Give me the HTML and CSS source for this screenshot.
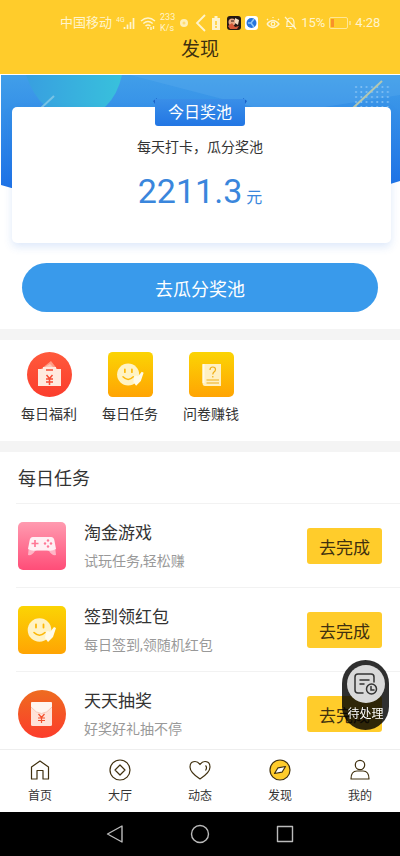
FILE: index.html
```html
<!DOCTYPE html>
<html lang="zh-CN">
<head>
<meta charset="utf-8">
<meta name="viewport" content="width=device-width, initial-scale=1">
<title>发现</title>
<link rel="stylesheet" href="styles.css">
</head>
<body>
<svg class="defs" width="0" height="0" aria-hidden="true">
  <defs>
    <linearGradient id="gold" x1="0" y1="0" x2="0" y2="1"><stop offset="0" stop-color="#fbd404"/><stop offset="1" stop-color="#ffa403"/></linearGradient>
    <linearGradient id="red" x1="0" y1="0" x2="0" y2="1"><stop offset="0" stop-color="#ff5a3c"/><stop offset="1" stop-color="#fb3d2c"/></linearGradient>
    <linearGradient id="orange" x1="0" y1="0" x2="0" y2="1"><stop offset="0" stop-color="#ee6c20"/><stop offset="1" stop-color="#fc3c2b"/></linearGradient>
    <linearGradient id="pink" x1="0" y1="0" x2="0" y2="1"><stop offset="0" stop-color="#ff9bb0"/><stop offset="1" stop-color="#ff4d78"/></linearGradient>
    <linearGradient id="sky" x1="0" y1="0" x2="0" y2="114" gradientUnits="userSpaceOnUse"><stop offset="0" stop-color="#419fe9"/><stop offset="1" stop-color="#1e72e6"/></linearGradient>
    <linearGradient id="teal" x1="0" y1="0" x2="1" y2="0"><stop offset="0" stop-color="#389fe0"/><stop offset="1" stop-color="#38c1dc"/></linearGradient>
    <pattern id="dots" width="5.3" height="5" patternUnits="userSpaceOnUse" x="354" y="11"><circle cx="2" cy="2" r="1" fill="#84c1f3"/></pattern>
    <symbol id="smile" viewBox="0 0 48 48">
      <rect width="48" height="48" rx="5" fill="url(#gold)"/>
      <circle cx="21.500" cy="24" r="11.800" fill="#fff3c4"/>
      <path d="M27 32l1-6 2-1 2 1 4-5 2 1-3 9-5 5z" fill="#fffbea"/>
      <path d="M18 18.500v3M25.500 18.500v3" stroke="#fcb80a" stroke-width="1.800" stroke-linecap="round"/>
      <path d="M16 26.500q5.500 5.500 11 0" fill="none" stroke="#fcb80a" stroke-width="1.600" stroke-linecap="round"/>
    </symbol>
  </defs>
</svg>

<header class="top">
  <div class="status">
    <span class="carrier">中国移动</span>
    <svg width="20" height="16" viewBox="0 0 20 16"><text x="0" y="7" class="tiny">4G</text><path d="M8.500 14v-2M11.500 14V9.500M14.500 14V7M17.500 14V3" stroke="currentColor" stroke-width="1.700"/></svg>
    <svg width="16" height="16" viewBox="0 0 16 16" fill="none" stroke="currentColor" stroke-width="1.400"><path d="M1 6q7-6 14 0M3.300 8.500q4.700-4 9.400 0M5.500 11q2.500-2 5 0"/><path d="M7 13h2M11 12v3M13.500 11v3"/></svg>
    <span class="speed">233<br>K/s</span>
    <svg class="dot" width="10" height="16" viewBox="0 0 10 16"><circle cx="5" cy="8" r="4" fill="#fff0b8"/><circle cx="5" cy="8" r="1.500" fill="#ffdc70"/></svg>
    <svg width="11" height="18" viewBox="0 0 11 18" fill="none" stroke="currentColor" stroke-width="1.800"><path d="M10 1L2 9l8 8"/></svg>
    <svg class="cell" width="8" height="16" viewBox="0 0 8 16"><path d="M2.500 1h3v2H8v12H0V3h2.500z" fill="currentColor"/><path d="M4 6v4M4 11v2" stroke="#ffcc2b" stroke-width="1.500"/></svg>
    <svg width="14" height="14" viewBox="0 0 14 14"><rect width="14" height="14" rx="3" fill="#251812"/><circle cx="5" cy="6" r="3.500" fill="#e8a783"/><path d="M1 10l4-3 3 4 4-1-2 3H3z" fill="#d55939"/><path d="M8 2l4 2-1 5-3-2z" fill="#f4dcc0"/><path d="M4 5h3" stroke="#251812"/></svg>
    <svg width="13" height="14" viewBox="0 0 13 14"><rect width="13" height="14" rx="3" fill="#fff"/><circle cx="6.500" cy="7" r="5" fill="#2674dc"/><path d="M3 7h3l3-4M6 7l3 4" stroke="#8cc5fa" stroke-width="1.500" fill="none"/></svg>
    <svg class="eye" width="14" height="14" viewBox="0 0 14 14" fill="none" stroke="currentColor" stroke-width="1.300"><path d="M1 8q6-7 12 0-6 7-12 0M2 4l-1-1M12 4l1-1M7 2V1"/><circle cx="7" cy="8" r="1.800"/></svg>
    <svg width="13" height="14" viewBox="0 0 13 14" fill="none" stroke="currentColor" stroke-width="1.200"><path d="M2 10.500h9M3 10V6q.5-4 3.500-4T10 6v4.500M5.500 12.500h2M1 1l11 12"/></svg>
    <span>15%</span>
    <svg width="22" height="12" viewBox="0 0 22 12"><rect x=".5" y=".5" width="18" height="11" rx="1.500" fill="none" stroke="#ffe696"/><path d="M2 2h3v8H2z" fill="#f9912a"/><path d="M21 4v4" stroke="#ffe696" stroke-width="1.500"/></svg>
    <span>4:28</span>
  </div>
  <h1>发现</h1>
</header>

<main>
  <section class="hero">
    <svg class="sky" viewBox="0 0 400 114" preserveAspectRatio="none" aria-hidden="true">
      <path d="M1 1h399v106L200 168 1 111z" fill="url(#sky)"/>
      <path d="M130 1h270v20L280 40z" fill="#69b5ee" opacity=".25"/>
      <path d="M26 1h96q-9 40-46 44Q40 42 26 1z" fill="url(#teal)"/>
      <path d="M54 22L40 35" stroke="#79c3e5" stroke-width="2"/>
      <rect x="354" y="11" width="36" height="22" fill="url(#dots)"/>
      <path d="M382 7l-29 27" stroke="#b5c8b0" stroke-width="2"/>
      <path d="M153 27l4-3v9zM247 27l-4-3v9z" fill="#1b62c8"/>
    </svg>
    <div class="card">
      <h2 class="ribbon">今日奖池</h2>
      <p class="lead">每天打卡，瓜分奖池</p>
      <p class="amount">2211.3<small>元</small></p>
    </div>
    <button class="share" type="button">去瓜分奖池</button>
  </section>

  <nav class="shortcuts" aria-label="快捷入口">
    <a href="#welfare">
      <svg width="45" height="45" viewBox="0 0 45 45"><circle cx="22.500" cy="22.500" r="22.500" fill="url(#red)"/><path d="M14 17l10-8 7 9z" fill="#ff9d86"/><path d="M16 16l7-4 5 5z" fill="#ffc5b5"/><path d="M11 17h5v-2h13v2h5v17H11z" fill="#ffeadf"/><path d="M19 18h7M19.500 23l3 3.500 3-3.500M19 27h7M19 30h7M22.500 26.500V33" fill="none" stroke="#f84c35" stroke-width="1.500"/></svg>
      <span>每日福利</span>
    </a>
    <a href="#daily">
      <svg width="45" height="45"><use href="#smile"/></svg>
      <span>每日任务</span>
    </a>
    <a href="#survey">
      <svg width="45" height="45" viewBox="0 0 45 45"><rect width="45" height="45" rx="5" fill="url(#gold)"/><path d="M14.500 12H32v22H16q-2.500 0-2.500-3V13q0-1 1-1z" fill="#fff0c2"/><path d="M14.500 12v19" stroke="#fffbe8" stroke-width="2"/><path d="M21 18q0-3 2.800-3 2.700 0 2.700 2.500 0 1.500-1.500 2.500-1.200 1-1.200 2.500M23.800 24v1.500M17.500 28H30M17.500 31H30" fill="none" stroke="#efae16" stroke-width="1.200"/></svg>
      <span>问卷赚钱</span>
    </a>
  </nav>

  <section class="tasks">
    <h2>每日任务</h2>
    <ul>
      <li>
        <svg width="48" height="48" viewBox="0 0 48 48"><rect width="48" height="48" rx="5" fill="url(#pink)"/><path d="M11 24L10 33q4 1 7-4h14q3 5 7 4l-1-9z" fill="#ffb5c6"/><path d="M15 15h18q3 0 3.500 4l1.500 8q-5 3-9 1H19q-4 2-9-1l1.500-8q.5-4 3.500-4z" fill="#fff0f4"/><path d="M17 18v7M13.500 21.500h7" stroke="#ff7896" stroke-width="1.700"/><g fill="#ff7896"><circle cx="30" cy="18.500" r="1.200"/><circle cx="30" cy="24.500" r="1.200"/><circle cx="27" cy="21.500" r="1.200"/><circle cx="33" cy="21.500" r="1.200"/></g></svg>
        <div class="info"><h3>淘金游戏</h3><p>试玩任务,轻松赚</p></div>
        <button type="button">去完成</button>
      </li>
      <li>
        <svg width="48" height="48"><use href="#smile"/></svg>
        <div class="info"><h3>签到领红包</h3><p>每日签到,领随机红包</p></div>
        <button type="button">去完成</button>
      </li>
      <li>
        <svg width="48" height="48" viewBox="0 0 48 48"><circle cx="24" cy="24" r="24" fill="url(#orange)"/><rect x="13" y="12" width="21" height="24" rx="1.500" fill="#ffe2d8"/><path d="M13 13q0-1 1.500-1h18q1.500 0 1.500 1v4q-10.500 13-21 0z" fill="#fff5ef"/><path d="M13 17q10.500 13 21 0" fill="none" stroke="#f7c8b8"/><path d="M20.500 24l3 3.500 3-3.500M20 28h7M20 30.500h7M23.500 27.500V33" fill="none" stroke="#f4512e" stroke-width="1.200"/></svg>
        <div class="info"><h3>天天抽奖</h3><p>好奖好礼抽不停</p></div>
        <button type="button">去完成</button>
      </li>
    </ul>
  </section>
</main>

<button class="pending" type="button">
  <svg width="38" height="38" viewBox="0 0 38 38" fill="none" stroke="#333" stroke-width="1.500" stroke-linecap="round"><circle cx="19" cy="19" r="19" fill="#d9d9d9" stroke="none"/><path d="M16 28h-5q-3 0-3-3V12q0-3 3-3h13q3 0 3 3v5M13 15h9M13 19h4"/><circle cx="24.500" cy="24" r="5"/><path d="M24 21.500V25h3"/></svg>
  <span>待处理</span>
</button>

<nav class="tabs" aria-label="主导航">
  <a href="#home"><svg viewBox="0 0 24 24"><path d="M3.500 9L12 3l8.500 6v12H15v-8.500H9V21H3.500z"/></svg><span>首页</span></a>
  <a href="#hall"><svg viewBox="0 0 24 24"><circle cx="12" cy="12" r="10"/><path d="M12 7l5 5-5 5-5-5z"/></svg><span>大厅</span></a>
  <a href="#feed"><svg viewBox="0 0 24 24"><path d="M12 21Q2 14.500 2 9q0-5.500 5-5.500 3 0 5 3 2-3 5-3 5 0 5 5.500 0 5.500-10 12zM17.500 7.500q2 2 0 5"/></svg><span>动态</span></a>
  <a href="#discover" aria-current="page"><svg viewBox="0 0 24 24"><circle cx="12" cy="12" r="10" fill="#ffcc2b"/><path d="M6.500 15.500L10 9.800l7.500-1.300L14 14.200z" fill="#fff"/></svg><span>发现</span></a>
  <a href="#me"><svg viewBox="0 0 24 24"><circle cx="12" cy="7" r="4.700"/><path d="M3 21q0-8 6-8h6q6 0 6 8z"/></svg><span>我的</span></a>
</nav>

<footer class="system">
  <button type="button" aria-label="返回"><svg viewBox="0 0 20 20"><path d="M17 2v16L2.500 10z"/></svg></button>
  <button type="button" aria-label="主屏幕"><svg viewBox="0 0 20 20"><circle cx="10" cy="10" r="8.500"/></svg></button>
  <button type="button" aria-label="最近任务"><svg viewBox="0 0 20 20"><path d="M2.500 2.500h15v15h-15z"/></svg></button>
</footer>
</body>
</html>
```

FILE: styles.css
```css
* { box-sizing: border-box; }

body {
  margin: 0;
  height: 100vh;
  display: flex;
  flex-direction: column;
  background: #fff;
  color: #333;
  font-family: Roboto, "Noto Sans CJK SC", sans-serif;
  font-size: 14px;
}

h1, h2, h3, p, ul { margin: 0; padding: 0; font-weight: 400; }
a { color: inherit; text-decoration: none; }
button { border: 0; padding: 0; font: inherit; color: inherit; cursor: pointer; }
svg { display: block; flex: none; }
.defs { position: absolute; }

.top { background: #ffcc2b; height: 74px; flex: none; }
.status {
  display: flex;
  align-items: center;
  gap: 4px;
  height: 37px;
  padding: 9px 16px 0 60px;
  color: #fff4cc;
  font-size: 13px;
  line-height: 16px;
  white-space: nowrap;
}
.tiny { font-size: 7px; fill: currentColor; }
.speed { font-size: 9px; line-height: 11px; }
.dot { margin-right: 2px; }
.cell { margin: 0 3px 0 2px; }
.eye { margin-left: 4px; }
.top h1 {
  color: #40300f;
  font-size: 19px;
  line-height: 26px;
  text-align: center;
}

main { flex: 1; min-height: 0; overflow-y: auto; scrollbar-width: none; }

.hero { position: relative; padding: 33px 9px 17px 12px; }
.sky { position: absolute; top: 0; left: 0; width: 100%; height: 114px; }
.card {
  position: relative;
  height: 136px;
  padding-right: 3px;
  border-radius: 5px;
  background: #fff;
  box-shadow: 0 4px 8px #2b74e028;
  text-align: center;
}
.ribbon {
  width: 90px;
  margin: 0 auto;
  position: relative;
  top: -8px;
  border-radius: 0 0 3px 3px;
  background: linear-gradient(#3a8fe8, #2276e4);
  color: #fff;
  font-size: 16px;
  line-height: 27px;
}
.lead { font-size: 14px; line-height: 22px; margin-top: 2px; }
.amount {
  display: flex;
  justify-content: center;
  align-items: baseline;
  gap: 4px;
  margin-top: 12px;
  color: #3a86dc;
  font-size: 34px;
  line-height: 42px;
}
.amount small { font-size: 16px; line-height: 20px; }
.share {
  display: block;
  width: calc(100% - 23px);
  height: 49px;
  margin: 20px 13px 0 10px;
  border-radius: 25px;
  background: #399aeb;
  color: #fff;
  font-size: 18px;
}

.shortcuts {
  display: flex;
  gap: 25px;
  padding: 12px 21px 16px;
  border: solid #f4f4f4;
  border-width: 11px 0;
}
.shortcuts a {
  display: flex;
  flex-direction: column;
  align-items: center;
  gap: 6px;
  line-height: 22px;
}

.tasks h2 { padding: 15px 18px 12px; font-size: 18px; line-height: 24px; }
.tasks ul { list-style: none; padding-left: 16px; }
.tasks li {
  display: flex;
  align-items: center;
  gap: 18px;
  padding: 14px 18px 13px 2px;
  border-top: 1px solid #f2f2f2;
}
.info { flex: 1; }
.info h3 { font-size: 17px; line-height: 30px; }
.info p { color: #999; line-height: 26px; }
.tasks button {
  width: 75px;
  height: 36px;
  border-radius: 3px;
  background: #ffcc2b;
  color: #40300f;
  font-size: 17px;
}

.pending {
  position: fixed;
  right: 11px;
  bottom: 126px;
  width: 47px;
  height: 70px;
  border-radius: 24px;
  background: #000000d0;
  color: #fff;
  display: flex;
  flex-direction: column;
  align-items: center;
  padding-top: 5px;
  gap: 2px;
  font-size: 12px;
  line-height: 18px;
  white-space: nowrap;
}

.tabs { flex: none; display: flex; height: 63px; border-top: 1px solid #eee; background: #fff; }
.tabs a {
  flex: 1;
  display: flex;
  flex-direction: column;
  align-items: center;
  gap: 5px;
  padding-top: 8px;
  font-size: 12px;
  line-height: 18px;
}
.tabs svg { width: 24px; height: 24px; fill: none; stroke: #40300f; stroke-width: 1.2; stroke-linejoin: round; }

.system {
  flex: none;
  display: flex;
  justify-content: center;
  gap: 65px;
  height: 44px;
  background: #000;
}
.system button { background: none; }
.system svg { width: 20px; height: 20px; fill: none; stroke: #bbb; stroke-width: 1.4; stroke-linejoin: round; }
```
